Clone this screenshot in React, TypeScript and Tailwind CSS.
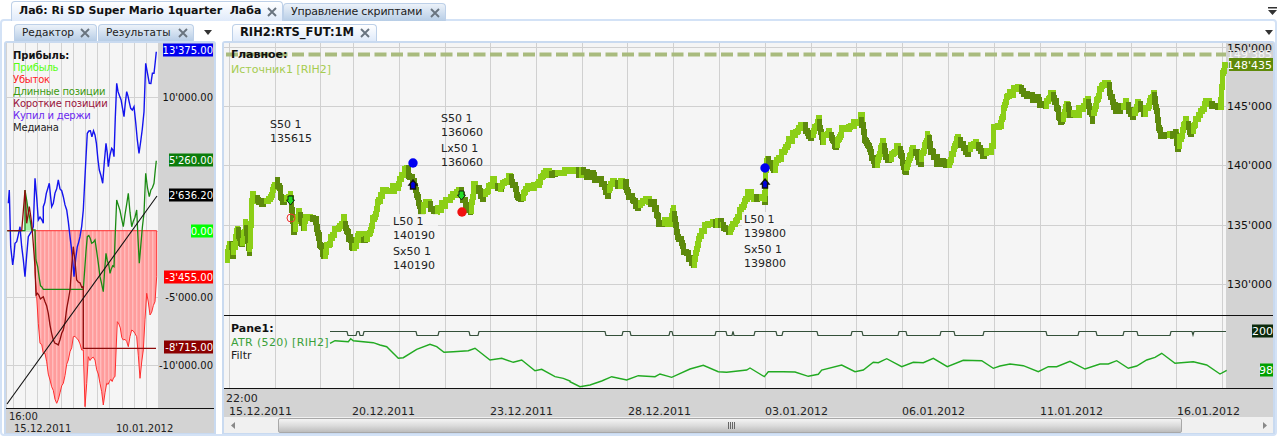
import React from "react";

type Pt = [number, number];

// chart traces were read off zoomed crops, so each piece keeps its crop origin
const fromCrop = (ox: number, oy: number, pts: Pt[]): Pt[] => pts.map(([x, y]) => [ox + x / 3, oy + y / 3]);
const toPoints = (pts: Pt[]) => pts.map(([x, y]) => `${x.toFixed(1)},${y.toFixed(1)}`).join(" ");

const price: Pt[] = [
  ...fromCrop(225, 100, [[5, 480], [12, 430], [22, 460], [35, 385], [48, 440], [60, 370], [72, 460], [80, 290], [100, 315], [130, 300], [155, 245], [170, 310], [195, 285], [205, 395], [220, 335], [235, 380], [242, 350], [270, 360], [285, 440], [295, 470], [320, 400], [355, 360], [380, 445], [400, 405], [420, 425], [440, 370], [470, 270], [510, 265], [540, 205], [565, 250], [585, 330], [600, 310], [630, 335], [680, 285], [700, 270], [735, 340], [745, 260], [770, 290], [800, 245], [825, 260]]),
  ...fromCrop(500, 100, [[0, 260], [30, 230], [50, 290], [60, 300], [80, 260], [110, 255], [135, 215], [170, 225], [200, 205], [250, 220], [300, 240], [320, 280], [335, 245], [375, 255], [385, 285], [410, 320], [425, 295], [460, 310], [475, 365], [510, 365], [518, 330], [530, 405], [550, 450], [578, 495], [590, 435], [605, 385], [660, 365], [685, 400], [720, 330], [740, 285], [793, 300], [795, 205], [800, 175], [820, 205], [860, 130], [900, 70], [930, 110], [955, 60], [965, 120], [985, 90], [1005, 140], [1025, 85], [1060, 70], [1085, 50]]),
  ...fromCrop(860, 60, [[0, 170], [15, 240], [30, 280], [45, 315], [65, 250], [80, 300], [115, 260], [135, 340], [155, 265], [180, 305], [200, 225], [220, 300], [265, 315], [290, 235], [320, 275], [345, 240], [365, 285], [400, 255], [400, 195], [420, 195], [440, 110], [470, 75], [510, 110], [550, 140], [575, 95], [600, 185], [620, 130], [630, 170], [660, 145], [680, 120], [695, 175], [725, 65], [740, 70], [765, 150], [795, 130], [815, 170], [830, 125], [850, 160], [880, 100], [900, 230], [945, 220], [950, 265], [975, 185], [990, 215], [1035, 130], [1080, 145], [1085, 55], [1095, 15]]),
];

const noise = (i: number) => {
  const v = Math.sin(i * 12.9898) * 43758.5453;
  return v - Math.floor(v) - 0.5;
};

// walks the trace in short steps and draws stair-step bars, coloured by the short trend
function priceBars(pts: Pt[]) {
  const ys: Pt[] = [pts[0]];
  let n = 0;
  for (let i = 1; i < pts.length; i++) {
    const [x0, y0] = pts[i - 1];
    const [x1, y1] = pts[i];
    const steps = Math.max(1, Math.round(Math.hypot(x1 - x0, y1 - y0) / 3));
    for (let s = 1; s <= steps; s++) {
      n++;
      const t = s / steps;
      ys.push([Math.round(x0 + (x1 - x0) * t), Math.round(y0 + (y1 - y0) * t + noise(n) * 6)]);
    }
  }
  return ys.slice(1).map((p, i) => {
    const prev = ys[i];
    const back = ys[Math.max(0, i - 2)];
    return { x: p[0] - 2, y: Math.min(p[1], prev[1]) - 3, h: Math.abs(p[1] - prev[1]) + 6, w: Math.max(5, p[0] - prev[0] + 3), up: p[1] <= back[1] };
  });
}

// adds the small jitter of the equity curves; flat runs stay flat
function jag(pts: Pt[], amp: number) {
  const out: Pt[] = [pts[0]];
  let n = 7;
  for (let i = 1; i < pts.length; i++) {
    const [x0, y0] = pts[i - 1];
    const [x1, y1] = pts[i];
    const steps = Math.max(1, Math.round(Math.abs(x1 - x0) / 1.5));
    for (let s = 1; s <= steps; s++) {
      n++;
      const t = s / steps;
      const a = s === steps || y0 === y1 ? 0 : amp;
      out.push([x0 + (x1 - x0) * t, y0 + (y1 - y0) * t + noise(n) * a]);
    }
  }
  return out;
}

const atr: Pt[] = [
  ...fromCrop(220, 310, [[330, 100], [345, 92], [385, 95], [392, 86], [400, 92], [460, 98], [480, 105], [500, 110], [535, 145], [550, 143], [590, 118], [630, 103], [650, 110], [672, 127], [700, 125], [745, 122], [765, 115], [810, 150], [845, 145], [880, 157], [905, 150], [945, 182], [965, 178], [1005, 200], [1030, 205], [1050, 213]]),
  ...fromCrop(570, 320, [[0, 185], [30, 200], [60, 195], [95, 183], [125, 170], [170, 180], [205, 167], [255, 170], [270, 162], [305, 172], [360, 147], [400, 136], [445, 155], [470, 157], [530, 150], [540, 144], [583, 170], [595, 155], [640, 155], [675, 156], [715, 169], [745, 163], [755, 150], [815, 135], [855, 155], [880, 150], [910, 127], [925, 128], [950, 116], [995, 140], [1030, 127], [1060, 128], [1090, 115], [1132, 140], [1180, 121], [1235, 122], [1270, 145]]),
  ...fromCrop(1000, 310, [[0, 168], [30, 162], [70, 167], [115, 185], [145, 170], [170, 170], [210, 154], [255, 177], [300, 162], [325, 162], [350, 152], [385, 175], [410, 168], [440, 150], [465, 142], [485, 130], [525, 160], [580, 155], [620, 165], [660, 192], [680, 181]]),
];

const lows: Pt[] = [[348, 356], [360, 363], [417, 438], [470, 478], [606, 622], [631, 669], [673, 715], [727, 732], [734, 754], [777, 782], [818, 851], [863, 898], [907, 940], [955, 983], [1047, 1078], [1097, 1123], [1138, 1170]];
const paneLine: Pt[] = (() => {
  const out: Pt[] = [[330, 331.5]];
  lows.forEach(([a, b]) => out.push([a - 1, 331.5], [a, 335.5], [b, 335.5], [b + 1, 331.5]));
  out.push([1192, 331.5], [1193, 335], [1194, 331.5], [1226, 331.5]);
  return out;
})();

const mainGrid = [229, 275, 320, 353, 399, 445, 490, 536, 582, 627, 673, 719, 765, 811, 856, 902, 948, 994, 1040, 1085, 1131, 1176, 1222];

const blue: Pt[] = [
  ...fromCrop(0, 140, [[25, 190], [28, 150], [32, 320], [38, 375], [45, 310], [60, 260], [75, 410], [85, 290], [100, 260], [105, 115], [115, 240], [130, 250], [130, 200], [148, 130], [155, 200], [175, 120], [190, 170], [200, 210], [210, 290], [222, 410], [232, 320], [240, 290], [250, 210]]),
  ...fromCrop(0, 40, [[262, 280], [285, 285], [298, 390], [308, 430], [318, 310], [325, 380], [335, 325], [342, 350], [350, 130], [372, 230], [380, 155], [392, 205], [402, 200], [417, 340], [432, 215], [437, 70], [448, 130], [462, 100], [469, 35]]),
];
const longs = fromCrop(0, 140, [[22, 272], [75, 272], [75, 150], [95, 270], [105, 270], [108, 360], [118, 415], [125, 440], [130, 448], [250, 448], [262, 290], [275, 310], [285, 300], [300, 410], [310, 455], [318, 340], [330, 400], [342, 380], [350, 180], [370, 260], [385, 160], [395, 260], [410, 210], [418, 370], [432, 220], [437, 100], [448, 170], [462, 130], [469, 62]]);
const shorts = fromCrop(0, 140, [[22, 272], [65, 272], [75, 150], [80, 250], [88, 200], [95, 250], [105, 380], [108, 465], [130, 470], [145, 520], [160, 600], [175, 615], [190, 570], [210, 450], [220, 320], [230, 420], [250, 440], [250, 625], [468, 625]]);
const loss = fromCrop(0, 140, [[105, 272], [105, 400], [110, 470], [120, 610], [135, 640], [150, 720], [170, 790], [190, 730], [205, 660], [220, 590], [235, 600], [250, 630], [255, 800], [265, 650], [285, 660], [300, 730], [310, 795], [320, 730], [345, 710], [352, 545], [370, 600], [385, 620], [395, 570], [410, 590], [420, 715], [430, 630], [440, 460], [450, 525], [465, 485], [470, 410], [470, 272]]);
const gain = fromCrop(0, 140, [[75, 272], [75, 150], [95, 270], [105, 272]]);

const leftGrid = [13, 25, 37, 49, 61, 73, 85, 97, 109, 122, 134, 146];

function Close() {
  return (
    <svg viewBox="0 0 10 10" className="w-[10px] h-[10px] shrink-0">
      <path d="M1 1 L9 9 M9 1 L1 9" stroke="#69747f" strokeWidth="1.9" />
    </svg>
  );
}

function Arrow({ className }: { className: string }) {
  return (
    <svg viewBox="0 0 8 5" className={className}>
      <path d="M0 0 H8 L4 5 Z" fill="#333" />
    </svg>
  );
}

function Tab({ label, active, className }: { label: string; active?: boolean; className: string }) {
  return (
    <div className={`flex items-center justify-between rounded-t-[4px] border border-b-0 border-[#bdd0e8] ${active ? "bg-gradient-to-b from-white to-[#dfeafa]" : "bg-gradient-to-b from-[#ecf2f9] to-[#b7cde6]"} ${className}`}>
      <span className="whitespace-pre">{label}</span>
      <Close />
    </div>
  );
}

function Label({ x, y, w, h, bg, color = "#111", text, right }: { x?: number; y: number; w?: number; h?: number; bg?: string; color?: string; text: string; right: number }) {
  return (
    <>
      {bg && <rect x={x} y={y - (h ?? 13) / 2} width={w} height={h ?? 13} fill={bg} />}
      <text x={right} y={y + 4} textAnchor="end" fill={color}>{text}</text>
    </>
  );
}

function Note({ x, y, lines }: { x: number; y: number; lines: string[] }) {
  return (
    <>
      <text x={x} y={y} fill="#222">{lines[0]}</text>
      <text x={x} y={y + 14} fill="#222">{lines[1]}</text>
    </>
  );
}

function Flag({ x, y, up, fill }: { x: number; y: number; up?: boolean; fill: string }) {
  const d = up ? "M0 -5 L4 0 H2.5 V4 H-2.5 V0 H-4 Z" : "M0 5 L4 0 H2.5 V-4 H-2.5 V0 H-4 Z";
  return <path transform={`translate(${x} ${y})`} d={d} fill={fill} stroke="#111" strokeWidth={up ? 1.4 : 0.9} />;
}

function LeftChart() {
  return (
    <div className="relative">
      <svg viewBox="6 43 208 390" className="block w-[208px] h-[390px] text-[10px]">
        <defs>
          <pattern id="hatch" width="4" height="4" patternUnits="userSpaceOnUse">
            <rect width="4" height="4" fill="#ff9c9c" />
            <rect width="1.4" height="4" fill="#ffbcbc" />
          </pattern>
        </defs>
        <rect x="6" y="43" width="208" height="390" fill="#d3d3d3" />
        <rect x="7" y="43" width="151" height="365" fill="#f5f5f5" />
        {leftGrid.map((x) => <line key={x} x1={x + 0.5} x2={x + 0.5} y1="43" y2="408" stroke="#d2d2d2" />)}
        {[97, 163, 231, 297, 365].map((y) => <line key={y} x1="7" x2="158" y1={y + 0.5} y2={y + 0.5} stroke="#d2d2d2" />)}
        <polygon points={toPoints(gain)} fill="#a8f0a8" />
        <polygon points={toPoints(jag(loss, 7))} fill="url(#hatch)" stroke="#ff2e2e" strokeWidth="1" />
        <polyline points={toPoints(jag(blue, 8))} fill="none" stroke="#1414ee" strokeWidth="1.4" />
        <polyline points={toPoints(jag(longs, 7))} fill="none" stroke="#1a8a12" strokeWidth="1.3" />
        <polyline points={toPoints(jag(shorts, 6))} fill="none" stroke="#8e0d0d" strokeWidth="1.3" />
        <line x1="7" y1="404" x2="157" y2="196" stroke="#111" strokeWidth="1.1" />
        <line x1="6" x2="214" y1="408.5" y2="408.5" stroke="#111" />
        <Label x={163} y={50} w={50} bg="#0000f0" color="#fff" text="13'375.00" right={213} />
        <Label y={97} text="10'000.00" right={213} />
        <Label x={169} y={160} w={44} bg="#0b7d0b" color="#fff" text="5'260.00" right={213} />
        <Label x={169} y={195} w={44} bg="#000" color="#fff" text="2'636.20" right={213} />
        <Label x={191} y={231} w={22} bg="#00ff00" color="#fff" text="0.00" right={213} />
        <Label x={164} y={277} w={49} bg="#ff0000" color="#fff" text="-3'455.00" right={213} />
        <Label y={297} text="-5'000.00" right={213} />
        <Label x={164} y={347} w={49} bg="#8b0000" color="#fff" text="-8'715.00" right={213} />
        <Label y={365} text="-10'000.00" right={213} />
        <text x="9" y="420" fill="#222">16:00</text>
        <text x="14" y="432" fill="#222">15.12.2011</text>
        <text x="116" y="432" fill="#222">10.01.2012</text>
      </svg>
      <div className="absolute left-[7px] top-[7px] flex flex-col text-[10px] leading-[12px] tracking-[-0.2px]">
        <span className="font-bold tracking-normal text-[#111]">Прибыль:</span>
        <span className="text-[#55ff11]">Прибыль</span>
        <span className="text-[#ff2222]">Убыток</span>
        <span className="text-[#3c9a10]">Длинные позиции</span>
        <span className="text-[#99143c]">Короткие позиции</span>
        <span className="text-[#6a28f0]">Купил и держи</span>
        <span className="text-[#222]">Медиана</span>
      </div>
    </div>
  );
}

function MainChart() {
  const bars = priceBars(price);
  return (
    <svg viewBox="224 43 1049 272" className="block w-[1049px] h-[272px] text-[11px]">
      <rect x="224" y="43" width="1002" height="272" fill="#f5f5f5" />
      <rect x="1226" y="43" width="47" height="272" fill="#d3d3d3" />
      {mainGrid.map((x) => <line key={x} x1={x + 0.5} x2={x + 0.5} y1="43" y2="315" stroke="#d0d0d0" />)}
      {[47, 106, 165, 225, 284].map((y) => <line key={y} x1="224" x2="1226" y1={y + 0.5} y2={y + 0.5} stroke="#d0d0d0" />)}
      <line x1="226" x2="1226" y1="54.5" y2="54.5" stroke="#a9bb7e" strokeWidth="4" strokeDasharray="12 4.5" />
      {bars.map((b, i) => (
        <rect key={i} x={b.x} y={b.y} width={b.w} height={b.h} fill={b.up ? "#8ccf17" : "#5d8a0c"} />
      ))}
      <rect x="390" y="214" width="48" height="56" fill="#f5f5f5" opacity="0.85" />
      <rect x="742" y="212" width="48" height="56" fill="#f5f5f5" opacity="0.85" />
      <Note x={270} y={128} lines={["S50 1", "135615"]} />
      <Note x={441} y={122} lines={["S50 1", "136060"]} />
      <Note x={441} y={152} lines={["Lx50 1", "136060"]} />
      <Note x={393} y={225} lines={["L50 1", "140190"]} />
      <Note x={393} y={255} lines={["Sx50 1", "140190"]} />
      <Note x={744} y={223} lines={["L50 1", "139800"]} />
      <Note x={744} y={253} lines={["Sx50 1", "139800"]} />
      <circle cx="291" cy="218" r="4" fill="none" stroke="#f03030" strokeWidth="1" />
      <Flag x={290.5} y={200} fill="#22dd22" />
      <circle cx="413" cy="163" r="4.7" fill="#0000f0" />
      <Flag x={413} y={185} up fill="#0000e0" />
      <Flag x={461.5} y={195} fill="#22dd22" />
      <circle cx="462" cy="212" r="4.7" fill="#f01010" />
      <circle cx="765" cy="168" r="4.7" fill="#0000f0" />
      <Flag x={765} y={184} up fill="#0000e0" />
      <text x="231" y="58" fontWeight="700" fill="#111">Главное:</text>
      <text x="231" y="73" fill="#a5cc50">Источник1 [RIH2]</text>
      <Label y={48} text="150'000" right={1272} />
      <Label y={54} color="#f6f6f6" text="149'385" right={1272} />
      <Label x={1229} y={64.5} w={44} bg="#5f8a0a" color="#fff" text="148'435" right={1272} />
      <Label y={106} text="145'000" right={1272} />
      <Label y={165} text="140'000" right={1272} />
      <Label y={225} text="135'000" right={1272} />
      <Label y={284} text="130'000" right={1272} />
    </svg>
  );
}

function PaneChart() {
  return (
    <svg viewBox="224 315 1049 74" className="block w-[1049px] h-[74px] text-[11px]">
      <rect x="224" y="315" width="1002" height="74" fill="#f5f5f5" />
      <rect x="1226" y="315" width="47" height="74" fill="#d3d3d3" />
      {mainGrid.map((x) => <line key={x} x1={x + 0.5} x2={x + 0.5} y1="315" y2="389" stroke="#d0d0d0" />)}
      <polyline points={toPoints(paneLine)} fill="none" stroke="#34503a" strokeWidth="1.2" />
      <polyline points={toPoints(atr)} fill="none" stroke="#22aa22" strokeWidth="1.4" />
      <line x1="224" x2="1273" y1="315.5" y2="315.5" stroke="#111" />
      <line x1="224" x2="1273" y1="388.5" y2="388.5" stroke="#111" />
      <text x="231" y="332" fontWeight="700" fill="#111">Pane1:</text>
      <text x="231" y="346" fill="#3aa03a" letterSpacing="0.35">ATR (520) [RIH2]</text>
      <text x="231" y="359" fill="#222">Filtr</text>
      <Label x={1252} y={331} w={21} bg="#0c2a0c" color="#fff" text="200" right={1273} />
      <Label x={1260} y={370} w={13} bg="#00a000" color="#fff" text="98" right={1273} />
    </svg>
  );
}

function DateStrip() {
  const dates: [number, string][] = [[229, "15.12.2011"], [352, "20.12.2011"], [490, "23.12.2011"], [628, "28.12.2011"], [765, "03.01.2012"], [902, "06.01.2012"], [1040, "11.01.2012"], [1177, "16.01.2012"]];
  return (
    <svg viewBox="224 389 1049 28" className="block w-[1049px] h-[28px] text-[11px]">
      <rect x="224" y="389" width="1049" height="28" fill="#d3d3d3" />
      <text x="226" y="402" fill="#222">22:00</text>
      {dates.map(([x, d]) => <text key={d} x={x} y="415" fill="#222">{d}</text>)}
    </svg>
  );
}

function Scrollbar() {
  return (
    <div className="flex h-[16px] items-end bg-[#f0f0f0]">
      <svg viewBox="0 0 4 7" className="mb-[4px] ml-[7px] w-[4px] h-[7px]"><path d="M4 0 V7 L0 3.5 Z" fill="#888" /></svg>
      <div className="ml-[43px] flex h-[15px] w-[904px] items-center justify-center rounded-[2px] border border-[#a8a8a8] bg-gradient-to-b from-[#f4f4f4] via-[#dcdcdc] to-[#bdbdbd]">
        <span className="ml-[3px] flex gap-[1px]">
          <i className="block h-[7px] w-[1px] bg-[#666]" />
          <i className="block h-[7px] w-[1px] bg-[#666]" />
          <i className="block h-[7px] w-[1px] bg-[#666]" />
          <i className="block h-[7px] w-[1px] bg-[#666]" />
        </span>
      </div>
      <svg viewBox="0 0 4 7" className="mb-[4px] ml-[81px] w-[4px] h-[7px]"><path d="M0 0 V7 L4 3.5 Z" fill="#888" /></svg>
    </div>
  );
}

export default function App() {
  return (
    <div className="flex h-[436px] w-[1277px] flex-col overflow-hidden bg-white font-['DejaVu_Sans',sans-serif] text-[#222]">
      <div className="relative z-10 -mb-[2px] flex h-[21px] items-end pl-[11px] pr-[1px] text-[11px]">
        <Tab active label="Лаб: Ri SD Super Mario 1quarter  Лаба" className="h-[20px] w-[272px] pl-[7px] pr-[5px] font-bold text-[#111]" />
        <Tab label="Управление скриптами" className="h-[18px] w-[163px] pl-[7px] pr-[5px] tracking-[-0.2px]" />
        <svg viewBox="0 0 9 8" className="ml-auto mb-[6px] mr-[-1px] w-[9px] h-[8px]">
          <path d="M0 0 H9 V1.5 H0 Z M0 3 H9 L4.5 8 Z" fill="#333" />
        </svg>
      </div>
      <div className="flex h-[417px] rounded-[4px] border-2 border-[#d3e2f6] pl-[2px]">
        <div className="flex w-[212px] flex-col">
          <div className="flex h-[20px] items-end pl-[10px] text-[10.5px]">
            <Tab label="Редактор" className="h-[17px] w-[83px] pl-[7px] pr-[6px]" />
            <Tab label="Результаты" className="ml-[1px] h-[17px] w-[96px] pl-[7px] pr-[5px]" />
            <Arrow className="ml-[10px] mb-[6px] w-[8px] h-[5px]" />
          </div>
          <div className="rounded-t-[3px] border-2 border-b border-[#c9daf0]">
            <LeftChart />
          </div>
        </div>
        <div className="ml-[6px] flex w-[1053px] flex-col">
          <div className="flex h-[20px] items-end pl-[10px] pr-[1px] text-[11.5px]">
            <Tab active label="RIH2:RTS_FUT:1M" className="h-[17px] w-[145px] pl-[7px] pr-[6px] font-bold text-[#111]" />
            <Arrow className="ml-auto mb-[6px] mr-[1px] w-[8px] h-[5px]" />
          </div>
          <div className="rounded-t-[3px] border-2 border-b border-[#c9daf0]">
            <MainChart />
            <PaneChart />
            <DateStrip />
            <Scrollbar />
          </div>
        </div>
      </div>
    </div>
  );
}
